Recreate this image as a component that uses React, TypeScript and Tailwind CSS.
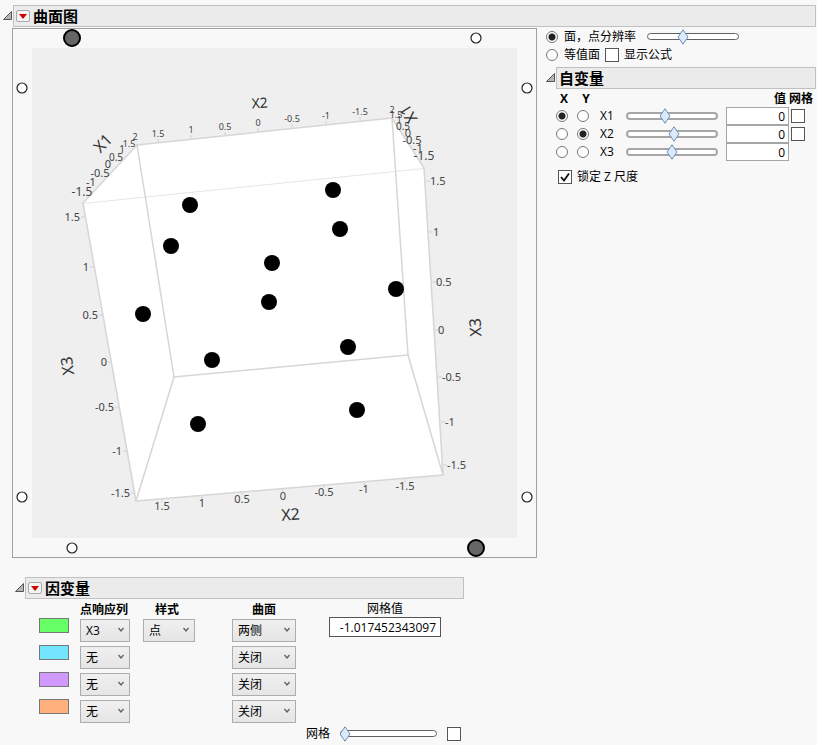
import { useState } from 'react'
import type { ReactNode } from 'react'

const edges: [number, number, number, number][] = [
  [83, 203, 137, 145],
  [137, 145, 392, 118],
  [392, 118, 424, 168],
  [424, 168, 443, 475],
  [443, 475, 136, 501],
  [136, 501, 83, 203],
  [137, 145, 174, 377],
  [174, 377, 136, 501],
  [174, 377, 408, 355],
  [392, 118, 408, 355],
  [408, 355, 443, 475],
]

const points = [
  [190, 205], [333, 190], [340, 229], [171, 246], [272, 263], [269, 302],
  [396, 289], [143, 314], [212, 360], [348, 347], [198, 424], [357, 410],
]

type Tick = { x: number; y: number; text: string; size?: number }

const topTicks: Tick[] = [
  { x: 158, y: 137, text: '1.5' },
  { x: 191, y: 133, text: '1' },
  { x: 225, y: 130, text: '0.5' },
  { x: 258, y: 126, text: '0' },
  { x: 292, y: 122, text: '-0.5' },
  { x: 326, y: 119, text: '-1' },
  { x: 360, y: 115, text: '-1.5' },
]

const bottomTicks: Tick[] = [
  { x: 162, y: 510, text: '1.5' },
  { x: 202, y: 507, text: '1' },
  { x: 242, y: 503, text: '0.5' },
  { x: 283, y: 500, text: '0' },
  { x: 324, y: 496, text: '-0.5' },
  { x: 364, y: 493, text: '-1' },
  { x: 405, y: 490, text: '-1.5' },
]

const leftTicks: Tick[] = [
  { x: 80, y: 221, text: '1.5' },
  { x: 89, y: 271, text: '1' },
  { x: 98, y: 319, text: '0.5' },
  { x: 107, y: 366, text: '0' },
  { x: 114, y: 411, text: '-0.5' },
  { x: 122, y: 455, text: '-1' },
  { x: 130, y: 497, text: '-1.5' },
]

const rightTicks: Tick[] = [
  { x: 430, y: 185, text: '1.5' },
  { x: 433, y: 236, text: '1' },
  { x: 436, y: 286, text: '0.5' },
  { x: 438, y: 334, text: '0' },
  { x: 442, y: 381, text: '-0.5' },
  { x: 445, y: 426, text: '-1' },
  { x: 447, y: 469, text: '-1.5' },
]

const depthLeft: Tick[] = [
  { x: 135, y: 140, text: '2', size: 9 },
  { x: 129, y: 147, text: '1.5', size: 9 },
  { x: 122, y: 153, text: '1', size: 10 },
  { x: 116, y: 161, text: '0.5', size: 10 },
  { x: 108, y: 168, text: '0', size: 11 },
  { x: 100, y: 177, text: '-0.5', size: 11 },
  { x: 91, y: 186, text: '-1', size: 11 },
  { x: 82, y: 196, text: '-1.5', size: 12 },
]

const depthRight: Tick[] = [
  { x: 392, y: 113, text: '2', size: 9 },
  { x: 396, y: 118, text: '1.5', size: 9 },
  { x: 399, y: 124, text: '1', size: 10 },
  { x: 403, y: 130, text: '0.5', size: 10 },
  { x: 408, y: 137, text: '0', size: 11 },
  { x: 412, y: 144, text: '-0.5', size: 11 },
  { x: 418, y: 152, text: '-1', size: 11 },
  { x: 424, y: 160, text: '-1.5', size: 12 },
]

const handles = [
  [476, 38], [22, 88], [527, 88], [22, 497], [527, 497], [72, 548],
]

const ivRows = [
  { name: 'X1', position: 42, grid: true },
  { name: 'X2', position: 52, grid: true },
  { name: 'X3', position: 50, grid: false },
]

const dvRows = [
  { color: 'bg-[#66ff66]', column: 'X3', style: '点', surface: '两侧' },
  { color: 'bg-[#73e5ff]', column: '无', style: '', surface: '关闭' },
  { color: 'bg-[#d099ff]', column: '无', style: '', surface: '关闭' },
  { color: 'bg-[#ffb07c]', column: '无', style: '', surface: '关闭' },
]

function Ticks({ items, anchor = 'middle', size = 11 }: { items: Tick[]; anchor?: 'start' | 'middle' | 'end'; size?: number }) {
  return (
    <g textAnchor={anchor} fill="#444">
      {items.map((t) => (
        <text key={t.text} x={t.x} y={t.y} fontSize={t.size ?? size}>{t.text}</text>
      ))}
    </g>
  )
}

function SurfacePlot() {
  return (
    <svg viewBox="12 28 525 530" className="block w-full" fontFamily='"Noto Sans", sans-serif' role="img" aria-label="曲面图">
      <rect x="12.5" y="28.5" width="524" height="529" fill="#f8f8f8" stroke="#a0a0a0" />
      <rect x="32" y="48" width="485" height="490" fill="#efefef" />
      <polygon points="83,203 137,145 392,118 424,168 443,475 136,501" fill="#fff" />

      {/* axis tick marks */}
      <g stroke="#d0d0d0">
        {topTicks.map((t) => <line key={t.text} x1={t.x} y1={t.y + 2} x2={t.x} y2={t.y + 6} />)}
        {bottomTicks.map((t) => <line key={t.text} x1={t.x} y1={t.y - 12} x2={t.x} y2={t.y - 8} />)}
        {leftTicks.map((t) => <line key={t.text} x1={t.x + 1} y1={t.y - 4} x2={t.x + 5} y2={t.y - 4} />)}
        {rightTicks.map((t) => <line key={t.text} x1={t.x - 4} y1={t.y - 4} x2={t.x} y2={t.y - 4} />)}
      </g>

      <line x1="83" y1="203.5" x2="424" y2="168.5" stroke="#e6e6e6" />
      <g stroke="#d6d6d6" strokeWidth="1.5" strokeLinecap="round">
        {edges.map(([x1, y1, x2, y2], i) => <line key={i} x1={x1} y1={y1} x2={x2} y2={y2} />)}
      </g>

      <Ticks items={topTicks} size={9} />
      <Ticks items={bottomTicks} />
      <Ticks items={leftTicks} anchor="end" />
      <Ticks items={rightTicks} anchor="start" />
      <Ticks items={depthLeft} />
      <Ticks items={depthRight} />

      <g fill="#333" textAnchor="middle" fontSize="16">
        <text transform="translate(260 108) rotate(-4)" fontSize="14">X2</text>
        <text transform="translate(291 520) rotate(-4)">X2</text>
        <text transform="translate(73 365) rotate(-98)">X3</text>
        <text transform="translate(481 327) rotate(-93)">X3</text>
        <text transform="translate(107 147) rotate(-46)">X1</text>
        <text transform="translate(413 111) rotate(-122)">X1</text>
      </g>

      {points.map(([cx, cy]) => <circle key={`${cx}-${cy}`} cx={cx} cy={cy} r="8" />)}

      {/* rotation handles */}
      <g fill="#fff" stroke="#222" strokeWidth="1.2">
        {handles.map(([cx, cy]) => <circle key={`${cx}-${cy}`} cx={cx} cy={cy} r="5" />)}
      </g>
      <g fill="#666" stroke="#000" strokeWidth="2">
        <circle cx="72" cy="38" r="8" />
        <circle cx="476" cy="548" r="8" />
      </g>
    </svg>
  )
}

function OutlineHeader({ title, menu = false }: { title: string; menu?: boolean }) {
  return (
    <div className="flex items-center">
      <button type="button" aria-label={`折叠 ${title}`} className="w-[10px] shrink-0">
        <svg viewBox="0 0 10 10" className="block size-[10px]">
          <path d="M8.500 0.500v8H0.500z" fill="#b5b5b5" stroke="#555" strokeWidth="1" />
        </svg>
      </button>
      <div className="flex h-[22px] flex-1 items-center gap-[3px] border border-[#c0c0c0] bg-[#ebebeb] pl-[2px]">
        {menu && (
          <button type="button" aria-label={`${title} 菜单`} className="flex h-3 w-[14px] items-center justify-center rounded-[2px] border border-[#a8a8a8] bg-[#f4f4f4]">
            <svg viewBox="0 0 8 5" className="h-[5px] w-2">
              <path d="M0 0h8L4 5z" fill="#d00000" />
            </svg>
          </button>
        )}
        <h2 className="text-[15px] leading-5 font-bold">{title}</h2>
      </div>
    </div>
  )
}

function Slider({ label, initial, width = 'w-[92px]', thick = false }: { label: string; initial: number; width?: string; thick?: boolean }) {
  const [value, setValue] = useState(initial)

  return (
    <div className={`relative h-4 ${width}`}>
      <div
        className={
          thick
            ? 'absolute inset-x-0 top-1 h-2 rounded-full border-2 border-[#a6a6a6] bg-white'
            : 'absolute inset-x-0 top-1 h-[7px] rounded-full border border-[#606060] bg-white'
        }
      />
      <svg
        viewBox="0 0 12 16"
        className="pointer-events-none absolute top-0 h-4 w-3 -translate-x-1/2"
        style={{ left: `${value}%` }}
      >
        <path d="M6 0.800L11 8l-5 7.200L1 8z" fill="#dce9f8" stroke="#6d8fb8" />
      </svg>
      <input
        type="range"
        aria-label={label}
        value={value}
        onChange={(e) => setValue(Number(e.target.value))}
        className="absolute inset-0 m-0 h-4 w-full opacity-0"
      />
    </div>
  )
}

function Radio({ name, label, checked = false }: { name: string; label?: string; checked?: boolean }) {
  return (
    <input
      type="radio"
      name={name}
      aria-label={label}
      defaultChecked={checked}
      className="block size-3 shrink-0 appearance-none rounded-full border border-[#777] bg-white checked:bg-[radial-gradient(circle,#222_3px,#fff_4px)]"
    />
  )
}

function Checkbox({ label, checked = false }: { label?: string; checked?: boolean }) {
  return (
    <span className="relative block size-[14px] shrink-0">
      <input
        type="checkbox"
        aria-label={label}
        defaultChecked={checked}
        className="peer block size-[14px] appearance-none border border-[#555] bg-white"
      />
      <svg viewBox="0 0 14 14" className="pointer-events-none absolute inset-0 hidden size-[14px] peer-checked:block">
        <path d="M3 7l3 3.500L11 3.500" fill="none" stroke="#111" strokeWidth="1.800" />
      </svg>
    </span>
  )
}

function Select({ label, value, className }: { label: string; value: string; className: string }) {
  return (
    <div className={`relative h-[23px] ${className}`}>
      <select
        aria-label={label}
        defaultValue={value}
        className="block h-full w-full appearance-none border border-[#adadad] bg-linear-to-b from-[#f0f0f0] to-[#e5e5e5] pl-[5px]"
      >
        <option>{value}</option>
      </select>
      <svg viewBox="0 0 8 6" className="pointer-events-none absolute top-2 right-[5px] h-[6px] w-2">
        <path d="M1.500 1L4 4l2.500-3" fill="none" stroke="#606060" strokeWidth="1.300" />
      </svg>
    </div>
  )
}

function Cell({ children }: { children?: ReactNode }) {
  return <td className="h-[18px] p-0 align-middle">{children}</td>
}

function IndependentVariables() {
  return (
    <section>
      <OutlineHeader title="自变量" />
      <div className="pl-[10px]">
        <table className="w-[259px] table-fixed border-collapse">
          <thead>
            <tr className="h-[18px] leading-4">
              <th className="w-[16px] p-0 pt-[2px]">X</th>
              <th className="w-[28px] p-0 pt-[2px]">Y</th>
              <th className="w-[26px] p-0" />
              <th className="w-[100px] p-0" />
              <th className="w-[63px] p-0 pt-[2px] pr-[3px] text-right">值</th>
              <th className="w-[26px] p-0 pt-[2px] text-left">网格</th>
            </tr>
          </thead>
          <tbody>
            {ivRows.map((row) => (
              <tr key={row.name}>
                <Cell><Radio name="x-axis" label={`X ${row.name}`} checked={row.name === 'X1'} /></Cell>
                <Cell><div className="pl-[5px]"><Radio name="y-axis" label={`Y ${row.name}`} checked={row.name === 'X2'} /></div></Cell>
                <Cell>{row.name}</Cell>
                <Cell><Slider label={row.name} initial={row.position} thick /></Cell>
                <Cell>
                  <input
                    type="text"
                    aria-label={`${row.name} 值`}
                    defaultValue="0"
                    className="block h-[18px] w-full border border-[#a6a6a6] bg-white px-[3px] text-right"
                  />
                </Cell>
                <Cell>{row.grid && <div className="pl-[2px]"><Checkbox label={`${row.name} 网格`} /></div>}</Cell>
              </tr>
            ))}
          </tbody>
        </table>
        <label className="mt-2 ml-[2px] flex items-center gap-[5px] leading-4">
          <Checkbox checked />
          锁定 Z 尺度
        </label>
      </div>
    </section>
  )
}

function DependentVariables() {
  return (
    <section className="mt-[19px] ml-[12px] w-[449px]">
      <OutlineHeader title="因变量" menu />
      <div className="flex pl-6">
        <table className="table-fixed border-collapse">
          <thead>
            <tr className="h-[19px] leading-4">
              <th className="w-[41px] p-0" />
              <th className="w-[63px] p-0 pt-[2px] text-left">点响应列</th>
              <th className="w-[89px] p-0 pt-[2px] pl-[12px] text-left">样式</th>
              <th className="w-[64px] p-0 pt-[2px]">曲面</th>
            </tr>
          </thead>
          <tbody>
            {dvRows.map((row, i) => (
              <tr key={row.color} className="h-[27px] align-top">
                <td className="p-0">
                  <button type="button" aria-label={`颜色 ${i + 1}`} className={`block h-[15px] w-[30px] border border-[#777] ${row.color}`} />
                </td>
                <td className="p-0 pt-px"><Select label={`点响应列 ${i + 1}`} value={row.column} className="w-[50px]" /></td>
                <td className="p-0 pt-px">{row.style && <Select label="样式" value={row.style} className="w-[52px]" />}</td>
                <td className="p-0 pt-px"><Select label={`曲面 ${i + 1}`} value={row.surface} className="w-16" /></td>
              </tr>
            ))}
          </tbody>
        </table>
        <label className="ml-[33px] flex w-28 flex-col pt-[2px] text-center leading-4">
          网格值
          <input type="text" defaultValue="-1.017452343097" className="h-5 w-full border border-[#555] bg-white px-1 text-right" />
        </label>
      </div>
      <div className="flex items-center justify-end gap-[10px] pr-[3px]">
        <span>网格</span>
        <Slider label="网格" initial={5} width="w-[97px]" />
        <Checkbox label="网格" />
      </div>
    </section>
  )
}

export default function App() {
  return (
    <main className="min-h-screen bg-[#f8f8f8] pt-[5px] pr-px pl-[3px] font-['Open_Sans','Noto_Sans_CJK_SC',sans-serif] text-xs text-black">
      <OutlineHeader title="曲面图" menu />
      <div className="mt-px flex items-start gap-[9px] pl-[9px]">
        <div className="w-[525px] shrink-0">
          <SurfacePlot />
        </div>
        <div className="min-w-0 flex-1">
          <div className="flex h-[18px] items-center gap-[11px]">
            <label className="flex items-center gap-[6px]">
              <Radio name="mode" checked />
              面，点分辨率
            </label>
            <Slider label="分辨率" initial={39} />
          </div>
          <div className="mb-1 flex h-[17px] items-center gap-[5px]">
            <label className="flex items-center gap-[6px]">
              <Radio name="mode" />
              等值面
            </label>
            <label className="flex items-center gap-[5px]">
              <Checkbox />
              显示公式
            </label>
          </div>
          <IndependentVariables />
        </div>
      </div>
      <DependentVariables />
    </main>
  )
}
